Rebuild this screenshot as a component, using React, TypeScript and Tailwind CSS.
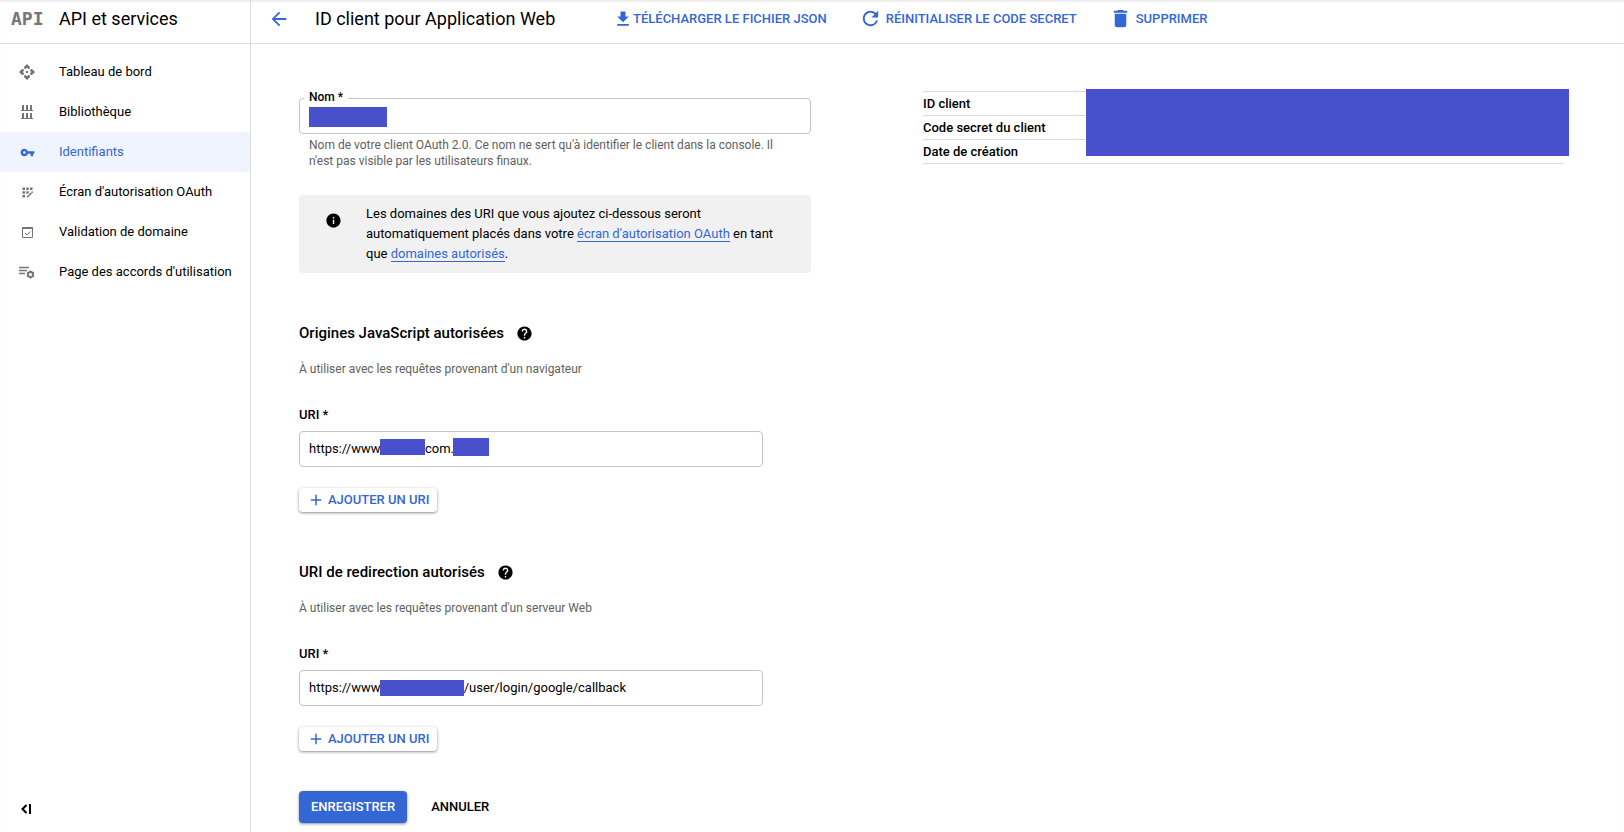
import React, { useState } from "react";
import {
  MdAdd,
  MdAppRegistration,
  MdArrowBack,
  MdDelete,
  MdFileDownload,
  MdHelp,
  MdInfo,
  MdRefresh,
  MdVpnKey,
} from "react-icons/md";

const DashboardIcon = () => (
  <svg width="16" height="16" viewBox="0 0 16 16" fill="currentColor">
    <path d="M8 0l3 3v1L9.700 5.300 8 3.800 6.300 5.300 5 4V3z" />
    <path d="M8 16l3-3v-1l-1.300-1.300L8 12.200l-1.700-1.500L5 12v1z" />
    <path d="M0 8l3-3h1l1.300 1.300L3.800 8l1.500 1.700L4 11H3z" />
    <path d="M16 8l-3-3h-1l-1.300 1.300L12.200 8l-1.500 1.700L12 11h1z" />
    <path d="M7 7h2v2H7z" />
  </svg>
);

const LibraryIcon = () => (
  <svg width="12" height="14" viewBox="0 0 12 14" fill="currentColor">
    <path d="M1 0h2v5h2V0h2v5h2V0h2v5h1v1H0V5h1zM1 8h2v5h2V8h2v5h2V8h2v5h1v1H0v-1h1z" />
  </svg>
);

const DomainIcon = () => (
  <svg width="11" height="11" viewBox="0 0 11 11" fill="none" stroke="currentColor">
    <path d="M.5.5h10v10H.5z" />
    <path d="M0 1h11" strokeWidth="2" />
    <path d="M3 6l2 2 3.500-3.500" />
  </svg>
);

const AgreementIcon = () => (
  <svg width="16" height="13" viewBox="0 0 16 13" fill="none" stroke="currentColor">
    <path d="M0 1.500h10M0 4.500h8M0 7.500h6" strokeWidth="1.400" />
    <circle cx="11.500" cy="8.500" r="2.500" strokeWidth="1.800" />
    <path
      d="M11.500 4.500v1.500M11.500 11v1.500M8 6.500l1.300.8M13.700 9.700l1.300.8M8 10.500l1.300-.8M13.700 7.300l1.300-.8"
      strokeWidth="1.800"
    />
  </svg>
);

const CollapseIcon = () => (
  <svg width="11" height="10" viewBox="0 0 11 10" fill="none" stroke="currentColor" strokeWidth="2">
    <path d="M5.500 1L1.500 5l4 4M9 0v10" />
  </svg>
);

const navItems = [
  { label: "Tableau de bord", icon: <DashboardIcon /> },
  { label: "Bibliothèque", icon: <LibraryIcon /> },
  { label: "Identifiants", icon: <MdVpnKey size={15} />, active: true },
  { label: "Écran d'autorisation OAuth", icon: <MdAppRegistration size={15} /> },
  { label: "Validation de domaine", icon: <DomainIcon /> },
  { label: "Page des accords d'utilisation", icon: <AgreementIcon /> },
];

// the hidden part of each address is kept blank, a bar covers it
const blank = (n: number) => "\u00a0".repeat(n);

function Sidebar() {
  return (
    <aside className="flex w-[251px] shrink-0 flex-col border-r border-[#dadce0]">
      <div className="flex h-11 items-center border-b border-[#dadce0] pb-1.5 pl-[11px]">
        <span className="w-12 font-['DejaVu_Sans_Mono'] text-lg font-bold text-[#757575]">API</span>
        <h2 className="text-lg">API et services</h2>
      </div>
      <nav className="pt-2">
        {navItems.map((item) => (
          <a
            key={item.label}
            href="#"
            className={
              item.active
                ? "flex h-10 items-center bg-[#f0f4fe] text-[13px] text-[#3367d6]"
                : "flex h-10 items-center text-[13px]"
            }
          >
            <span
              className={
                item.active
                  ? "mr-[5px] flex w-[54px] justify-center"
                  : "mr-[5px] flex w-[54px] justify-center text-[#757575]"
              }
            >
              {item.icon}
            </span>
            {item.label}
          </a>
        ))}
      </nav>
      <button type="button" aria-label="Réduire le menu" className="mt-auto mb-[18px] ml-[21px] w-4">
        <CollapseIcon />
      </button>
    </aside>
  );
}

function Header() {
  return (
    <header className="flex h-11 items-center border-b border-[#dadce0] pb-1.5 text-[13px] font-medium text-[#3367d6]">
      <button type="button" aria-label="Retour" className="ml-[17px]">
        <MdArrowBack size={22} />
      </button>
      <h1 className="ml-[25px] w-[298px] text-lg font-normal text-black">ID client pour Application Web</h1>
      <button type="button" className="flex items-center">
        <MdFileDownload size={20} />
        TÉLÉCHARGER LE FICHIER JSON
      </button>
      <button type="button" className="ml-8 flex items-center gap-1">
        <MdRefresh size={23} />
        RÉINITIALISER LE CODE SECRET
      </button>
      <button type="button" className="ml-8 flex items-center gap-1">
        <MdDelete size={23} />
        SUPPRIMER
      </button>
    </header>
  );
}

type UriSectionProps = {
  id: string;
  title: string;
  hint: string;
  initial: string;
  children: React.ReactNode;
};

function UriSection({ id, title, hint, initial, children }: UriSectionProps) {
  const [uri, setUri] = useState(initial);

  return (
    <section className="flex flex-col items-start">
      <div className="flex items-center gap-3">
        <h3 className="text-[15px] leading-5 font-medium">{title}</h3>
        <MdHelp size={17} />
      </div>
      <p className="mt-[18px] text-xs text-[#616161]">{hint}</p>
      <label htmlFor={id} className="mt-7 text-[13px] leading-5 font-medium">
        URI *
      </label>
      <div className="relative mt-[6px] w-full max-w-[464px]">
        <input
          id={id}
          type="text"
          value={uri}
          onChange={(e) => setUri(e.target.value)}
          className="block h-9 w-full rounded border border-[#c4c4c4] px-[9px] pb-0.5 text-[13px] focus:outline-none"
        />
        {children}
      </div>
      <button
        type="button"
        className="mt-[21px] flex h-6 items-center gap-[3px] rounded-sm px-2 text-[13px] font-medium text-[#3367d6] shadow-[0_1px_3px_rgba(0,0,0,0.45)]"
      >
        <MdAdd size={18} />
        AJOUTER UN URI
      </button>
    </section>
  );
}

export default function App() {
  const [name, setName] = useState("");

  return (
    <div className="flex min-h-screen bg-white font-[Roboto,sans-serif] text-black shadow-[inset_0_3px_3px_-2px_rgba(0,0,0,0.12)]">
      <Sidebar />
      <div className="flex-1">
        <Header />
        <main className="flex items-start gap-28 pt-[47px] pr-[60px] pl-12">
          <form className="w-full max-w-[512px] shrink-0" onSubmit={(e) => e.preventDefault()}>
            <div className="relative mt-[7px]">
              <input
                id="name"
                type="text"
                value={name}
                onChange={(e) => setName(e.target.value)}
                className="block h-9 w-full rounded border border-[#c4c4c4] px-[9px] text-[13px] focus:outline-none"
              />
              <label
                htmlFor="name"
                className="absolute -top-[9px] left-[5px] bg-white px-[5px] text-xs font-medium"
              >
                Nom *
              </label>
              <span className="absolute top-[9px] left-[10px] h-5 w-[78px] bg-[#4850cb]" />
            </div>
            <p className="mt-[3px] pr-6 pl-[10px] text-xs text-[#616161]">
              Nom de votre client OAuth 2.0. Ce nom ne sert qu'à identifier le client dans la console. Il n'est
              pas visible par les utilisateurs finaux.
            </p>

            <div className="mt-[26px] flex rounded-sm bg-[#f1f1f1] py-[9px] pr-8">
              <MdInfo size={17} className="mt-2 mr-6 ml-[26px] shrink-0" />
              <p className="text-[13px] leading-5">
                Les domaines des URI que vous ajoutez ci-dessous seront automatiquement placés dans votre{" "}
                <a href="#" className="border-b border-[#3367d6] text-[#3367d6]">
                  écran d'autorisation OAuth
                </a>{" "}
                en tant que{" "}
                <a href="#" className="border-b border-[#3367d6] text-[#3367d6]">
                  domaines autorisés
                </a>
                .
              </p>
            </div>

            <div className="mt-[50px] flex flex-col gap-[50px]">
              <UriSection
                id="origin"
                title="Origines JavaScript autorisées"
                hint="À utiliser avec les requêtes provenant d'un navigateur"
                initial={"https://www." + blank(13) + "com."}
              >
                <span className="absolute top-2 left-[81px] h-4 w-[45px] bg-[#4850cb]" />
                <span className="absolute top-[7px] left-[154px] h-[18px] w-9 bg-[#4850cb]" />
              </UriSection>
              <UriSection
                id="redirect"
                title="URI de redirection autorisés"
                hint="À utiliser avec les requêtes provenant d'un serveur Web"
                initial={"https://www." + blank(25) + "/user/login/google/callback"}
              >
                <span className="absolute top-[10px] left-[81px] h-4 w-[84px] bg-[#4850cb]" />
              </UriSection>
            </div>

            <div className="mt-10 flex gap-6 pb-2 text-[13px] font-medium">
              <button
                type="submit"
                className="h-8 rounded-sm bg-[#3367d6] px-3 text-white shadow-[0_1px_3px_rgba(0,0,0,0.45)]"
              >
                ENREGISTRER
              </button>
              <button type="button">ANNULER</button>
            </div>
          </form>

          <div className="relative flex-1">
            <table className="w-full border-t border-[#dadce0] text-left text-[13px]">
              <tbody>
                {["ID client", "Code secret du client", "Date de création"].map((row) => (
                  <tr key={row} className="h-6 border-b border-[#dadce0]">
                    <th scope="row" className="w-[163px] p-0 font-medium">
                      {row}
                    </th>
                    <td className="p-0" />
                  </tr>
                ))}
              </tbody>
            </table>
            <span className="absolute -top-[2px] -right-[5px] left-[163px] h-[67px] bg-[#4850cb]" />
          </div>
        </main>
      </div>
    </div>
  );
}
